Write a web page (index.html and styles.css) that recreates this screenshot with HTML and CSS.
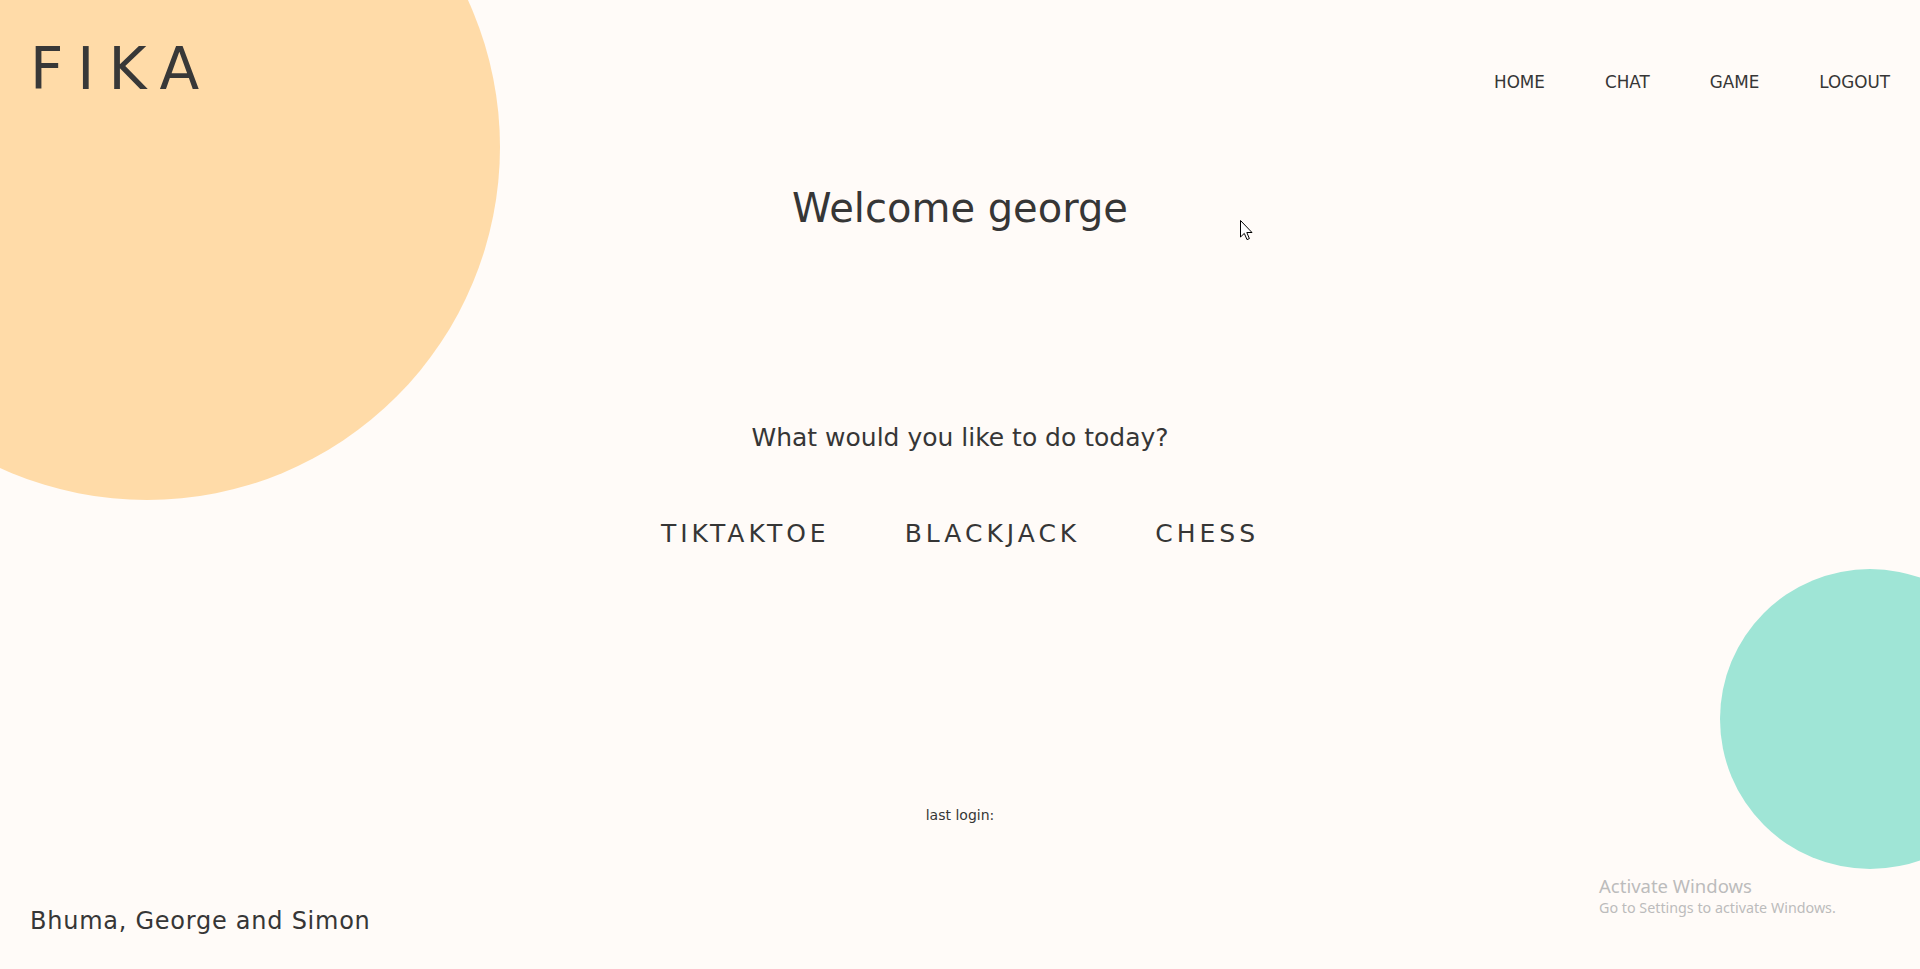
FILE: index.html
```html
<!DOCTYPE html>
<html lang="en">
<head>
<meta charset="utf-8">
<title>FIKA</title>
<link rel="stylesheet" href="styles.css">
</head>
<body>
<div class="page">
  <div class="blob blob-orange"></div>
  <div class="blob blob-teal"></div>

  <header class="topbar">
    <div class="logo">FIKA</div>
    <nav class="nav">
      <a href="#" class="nav-link">HOME</a>
      <a href="#" class="nav-link">CHAT</a>
      <a href="#" class="nav-link">GAME</a>
      <a href="#" class="nav-link">LOGOUT</a>
    </nav>
  </header>

  <main class="main">
    <h1 class="welcome">Welcome george</h1>
    <p class="question">What would you like to do today?</p>
    <div class="games">
      <a href="#" class="game-link">TIKTAKTOE</a>
      <a href="#" class="game-link">BLACKJACK</a>
      <a href="#" class="game-link">CHESS</a>
    </div>
    <p class="last-login">last login:</p>
  </main>

  <footer class="footer">Bhuma, George and Simon</footer>

  <div class="watermark">
    <div class="wm-title">Activate Windows</div>
    <div class="wm-sub">Go to Settings to activate Windows.</div>
  </div>

  <svg class="cursor" width="13" height="21" viewBox="0 0 13 21">
    <path d="M0.5 0.5 L0.5 17 L4.3 13.4 L7 19.6 L9.4 18.6 L6.8 12.5 L12 12.5 Z" fill="#fff" stroke="#000" stroke-width="1" stroke-linejoin="miter"/>
  </svg>
</div>
</body>
</html>
```

FILE: styles.css
```css
* {
  box-sizing: border-box;
}

html, body {
  margin: 0;
  padding: 0;
}

body {
  background: #fffbf8;
  color: #363636;
  font-family: "DejaVu Sans", "Liberation Sans", sans-serif;
  overflow: hidden;
}

.page {
  position: relative;
  height: 969px;
  display: flex;
  flex-direction: column;
  overflow: hidden;
}

.blob {
  position: absolute;
  border-radius: 50%;
  z-index: 0;
}

.blob-orange {
  width: 706px;
  height: 706px;
  left: -206px;
  top: -206px;
  background: #ffdba8;
}

.blob-teal {
  width: 300px;
  height: 300px;
  right: -100px;
  top: 569px;
  background: #9fe5d6;
}

.topbar {
  position: relative;
  z-index: 1;
  display: flex;
  justify-content: space-between;
  align-items: flex-start;
  padding: 40px 30px 0 30px;
}

.logo {
  font-size: 58px;
  line-height: 58px;
  letter-spacing: 14px;
  color: #383838;
}

.nav {
  display: flex;
  gap: 60px;
  margin-top: 32px;
}

.nav-link {
  font-size: 16.8px;
  line-height: 20px;
  color: #363636;
  text-decoration: none;
}

.main {
  position: relative;
  z-index: 1;
  display: flex;
  flex-direction: column;
  align-items: center;
}

.welcome {
  margin: 86px 0 0 0;
  font-size: 40px;
  line-height: 48px;
  font-weight: normal;
  color: #363636;
}

.question {
  margin: 190px 0 0 0;
  font-size: 25px;
  line-height: 32px;
  color: #363636;
}

.games {
  display: flex;
  justify-content: center;
  gap: 75px;
  margin-top: 65px;
}

.game-link {
  font-size: 25px;
  line-height: 30px;
  letter-spacing: 4px;
  color: #363636;
  text-decoration: none;
}

.game-link.wide {
  letter-spacing: 5px;
}

.last-login {
  margin: 256px 0 0 0;
  font-size: 14px;
  line-height: 20px;
  color: #363636;
}

.footer {
  position: relative;
  z-index: 1;
  margin-top: 81px;
  padding-left: 30px;
  font-size: 24px;
  line-height: 30px;
  letter-spacing: 0.75px;
  color: #363636;
}

.watermark {
  position: absolute;
  left: 1599px;
  top: 874px;
  z-index: 2;
  font-family: "Noto Sans", "Open Sans", sans-serif;
  color: #bcbcbc;
}

.wm-title {
  font-size: 18.5px;
  line-height: 24px;
}

.wm-sub {
  font-size: 14.3px;
  line-height: 20px;
}

.cursor {
  position: absolute;
  left: 1240px;
  top: 220px;
  z-index: 3;
}
```
